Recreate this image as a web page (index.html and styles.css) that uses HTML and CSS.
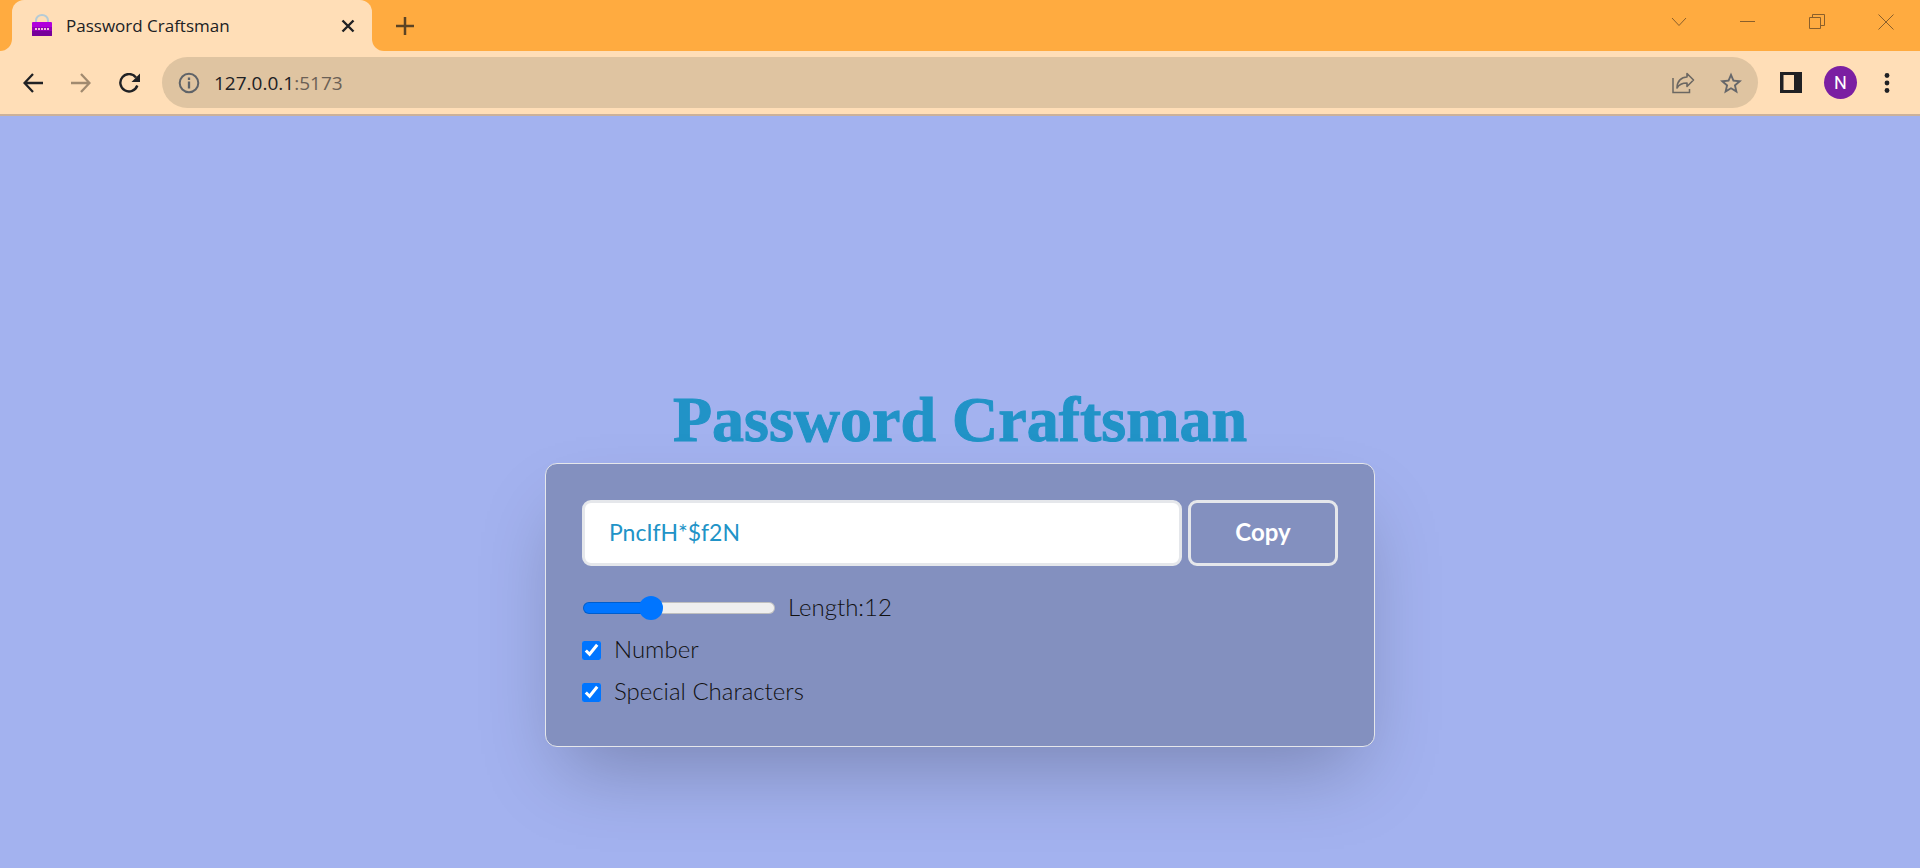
FILE: index.html
```html
<!DOCTYPE html>
<html lang="en">
<head>
<meta charset="utf-8">
<title>Password Craftsman</title>
<link rel="stylesheet" href="styles.css">
</head>
<body>
<header class="browser">
  <div class="tabs">
    <div class="tab-edge"></div>
    <div class="tab">
      <svg class="favicon" width="22" height="23" viewBox="0 0 22 23"><path d="M5 9V6.500a6 5.500 0 0 1 12 0V9" fill="none" stroke="#b5cbd6" stroke-width="2"/><rect x="1" y="8" width="20" height="14" rx="1" fill="#b000dc"/><path d="M1 13h20v8a1 1 0 0 1-1 1H2a1 1 0 0 1-1-1z" fill="#9400b8"/><path d="M1 17h20v4a1 1 0 0 1-1 1H2a1 1 0 0 1-1-1z" fill="#76009a"/><path d="M4 15h14" stroke="#f0c4d8" stroke-width="2" stroke-dasharray="2 1"/></svg>
      <span class="tab-title">Password Craftsman</span>
      <button class="icon-btn" aria-label="Close tab"><svg width="14" height="14" viewBox="0 0 14 14"><path d="M1.500 1.500l11 11M12.500 1.500l-11 11" stroke="#202124" stroke-width="2.400"/></svg></button>
    </div>
    <div class="tab-edge tab-edge-right"></div>
    <button class="icon-btn new-tab" aria-label="New tab"><svg width="18" height="18" viewBox="0 0 18 18"><path d="M9 0v18M0 9h18" stroke="#5b4324" stroke-width="2.500"/></svg></button>
    <div class="window-buttons">
      <button class="icon-btn" aria-label="Search tabs"><svg width="16" height="16" viewBox="0 0 16 16"><path d="M1 4l7 7.500L15 4"/></svg></button>
      <button class="icon-btn" aria-label="Minimize"><svg width="16" height="16" viewBox="0 0 16 16"><path d="M0 7.500h15"/></svg></button>
      <button class="icon-btn" aria-label="Restore"><svg width="16" height="16" viewBox="0 0 16 16"><path d="M.500 3.500h11v11h-11zM3.500 3.500v-3h12v11h-3.500"/></svg></button>
      <button class="icon-btn" aria-label="Close"><svg width="16" height="16" viewBox="0 0 16 16"><path d="M.500 .500l15 15M15.500 .500l-15 15"/></svg></button>
    </div>
  </div>
  <div class="toolbar">
    <div class="nav">
      <button class="icon-btn" aria-label="Back"><svg width="20" height="20" viewBox="0 0 20 20"><path d="M20 10H2M10 1L1.500 10l8.500 9" fill="none" stroke="#202124" stroke-width="2.300"/></svg></button>
      <button class="icon-btn" aria-label="Forward"><svg width="20" height="20" viewBox="0 0 20 20"><path d="M0 10h18M10 1l8.500 9-8.500 9" fill="none" stroke="#a18a6f" stroke-width="2.300"/></svg></button>
      <button class="icon-btn" aria-label="Reload"><svg width="21" height="20" viewBox="0 0 21 20"><path d="M18.300 12.500A8.700 8.700 0 1 1 17 4.500" fill="none" stroke="#202124" stroke-width="2.400"/><path d="M21 .500V9h-8.500z" fill="#202124"/></svg></button>
    </div>
    <div class="address">
      <svg width="22" height="22" viewBox="0 0 22 22"><circle cx="11" cy="11" r="9.300" fill="none" stroke="#5f6368" stroke-width="2"/><path d="M11 9.500v7M11 5.500v2.500" stroke="#5f6368" stroke-width="2.300"/></svg>
      <span class="url">127.0.0.1<span class="port">:5173</span></span>
      <div class="address-actions">
        <button class="icon-btn" aria-label="Share"><svg width="24" height="22" viewBox="0 0 24 22"><path d="M2 6v14.500h16.500V17" fill="none" stroke="#6b6762" stroke-width="1.500"/><path d="M6 16c0-7 4.500-11 10-11V1.500l6.500 6.500-6.500 6.500V11C11 11 8 12.500 6 16z" fill="none" stroke="#6b6762" stroke-width="1.600" stroke-linejoin="round"/></svg></button>
        <button class="icon-btn" aria-label="Bookmark"><svg width="22" height="22" viewBox="0 0 24 24"><path fill="#66676a" d="M24 9.240l-8.630-.740L12 .500 8.630 8.500 0 9.240l6.550 5.680L4.580 23.500 12 18.900l7.420 4.600-1.970-8.580zM12 16.500l-4.300 2.600 1.140-4.900-3.800-3.300 5-.430L12 5.860l1.960 4.610 5 .430-3.800 3.300 1.140 4.900z"/></svg></button>
      </div>
    </div>
    <button class="icon-btn" aria-label="Side panel"><svg width="22" height="22" viewBox="0 0 22 22"><path fill="#202124" fill-rule="evenodd" d="M0 0h22v21H0zM3.500 3v15H14V3z"/></svg></button>
    <button class="icon-btn avatar" aria-label="Profile">N</button>
    <button class="icon-btn" aria-label="Menu"><svg width="16" height="22" viewBox="0 0 16 22" fill="#202124"><circle cx="8" cy="3.500" r="2.400"/><circle cx="8" cy="11" r="2.400"/><circle cx="8" cy="18.500" r="2.400"/></svg></button>
  </div>
</header>
<main class="page">
  <h1 class="title">Password Craftsman</h1>
  <section class="card">
    <div class="output">
      <input class="password" type="text" value="PncIfH*$f2N" aria-label="Generated password" readonly>
      <button class="copy">Copy</button>
    </div>
    <div class="option">
      <input class="range" id="length" type="range" min="6" max="24" value="12">
      <label for="length">Length:12</label>
    </div>
    <div class="option">
      <input class="check" id="number" type="checkbox" checked>
      <label for="number">Number</label>
    </div>
    <div class="option">
      <input class="check" id="special" type="checkbox" checked>
      <label for="special">Special Characters</label>
    </div>
  </section>
</main>
</body>
</html>
```
FILE: styles.css
```css
* { box-sizing: border-box; }
body {
  margin: 0;
  min-height: 100vh;
  display: flex;
  flex-direction: column;
  background: #a3b2ef;
  font-family: Lato, sans-serif;
}
svg { display: block; flex: none; }
.icon-btn {
  border: 0;
  padding: 0;
  background: none;
  display: flex;
  align-items: center;
  justify-content: center;
  flex: none;
}
.browser { font-family: "Open Sans", sans-serif; color: #202124; }
.tabs {
  display: flex;
  height: 51px;
  background: linear-gradient(#ffab40 24px, #ffdeb7 24px);
}
.tab-edge { width: 12px; background: #ffab40; border-bottom-right-radius: 12px; }
.tab-edge-right { border-radius: 0 0 0 12px; }
.tab {
  width: 360px;
  padding: 0 17px 0 19px;
  display: flex;
  align-items: center;
  gap: 13px;
  background: #ffdeb7;
  border-radius: 12px 12px 0 0;
}
.tab-title { flex: 1; font-size: 17px; line-height: 24px; }
.new-tab { width: 42px; background: #ffab40; }
.window-buttons {
  flex: 1;
  display: flex;
  justify-content: flex-end;
  gap: 53px;
  padding: 14px 26px 0 0;
  background: #ffab40;
}
.window-buttons .icon-btn { height: 16px; }
.window-buttons path { fill: none; stroke: #8a5f2b; stroke-width: 1; }
.toolbar {
  display: flex;
  align-items: center;
  gap: 22px;
  height: 65px;
  padding: 0 25px 0 23px;
  background: #ffdeb7;
  border-bottom: 2px solid #cbb19a;
}
.nav { display: flex; gap: 28px; }
.address {
  flex: 1;
  display: flex;
  align-items: center;
  gap: 14px;
  height: 51px;
  padding: 0 16px;
  border-radius: 26px;
  background: #dfc4a1;
}
.address-actions { display: flex; gap: 25px; }
.url { flex: 1; font-size: 19px; line-height: 28px; }
.port { color: #6b6055; }
.avatar {
  width: 33px;
  height: 33px;
  border-radius: 50%;
  background: #7b1fa2;
  color: #fff;
  font: 18px/33px Roboto, sans-serif;
}
.page {
  flex: 1;
  display: flex;
  flex-direction: column;
  align-items: center;
  justify-content: center;
  padding: 146px 24px 0;
}
.title {
  margin: 0 0 6px;
  color: #2193c7;
  font: bold 64px/74px "Liberation Serif", serif;
  -webkit-text-stroke: 1px #2193c7;
}
.card {
  width: 100%;
  max-width: 830px;
  padding: 36px 36px 33px;
  border: 1px solid #e5e7eb;
  border-radius: 12px;
  background: #8390bf;
  box-shadow: 0 38px 75px -18px rgb(0 0 0 / 25%);
}
.output { display: flex; gap: 6px; margin-bottom: 21px; }
.password, .copy {
  height: 66px;
  padding: 0 24px 3px;
  border: 3px solid #e5e7eb;
  border-radius: 9px;
  font: 24px/30px Lato, sans-serif;
}
.password {
  flex: 1;
  min-width: 0;
  background: #fff;
  color: #2193c7;
  font-size: 23px;
}
.copy {
  width: 150px;
  background: transparent;
  color: #fff;
  font-weight: bold;
}
.option {
  display: flex;
  align-items: center;
  gap: 13px;
  height: 42px;
  color: #111;
  font-size: 24px;
  font-weight: 300;
}
.option label { padding-bottom: 3px; }
.check { width: 19px; height: 19px; margin: 0; accent-color: #0075ff; }
.range {
  appearance: none;
  width: 192px;
  height: 24px;
  margin: 0 0 0 1px;
  background: none;
}
.range::-webkit-slider-runnable-track {
  height: 12px;
  border-radius: 6px;
  background: linear-gradient(90deg, #0075ff 35%, #efefef 35%);
  box-shadow: inset 0 0 0 1px rgb(0 0 0 / 20%);
}
.range::-webkit-slider-thumb {
  appearance: none;
  width: 24px;
  height: 24px;
  margin-top: -6px;
  border-radius: 50%;
  background: #0075ff;
}
```
